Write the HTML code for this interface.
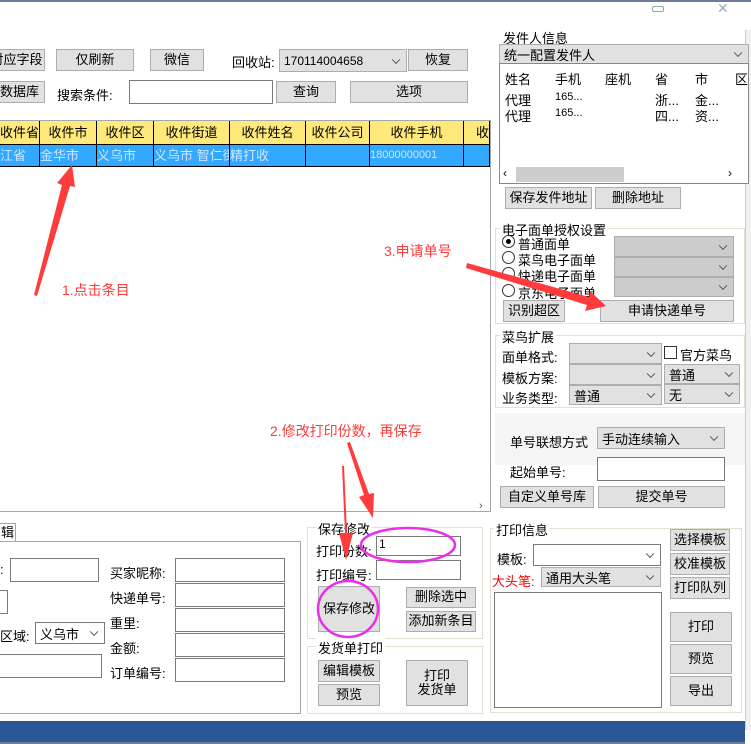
<!DOCTYPE html>
<html><head><meta charset="utf-8"><style>
*{box-sizing:border-box;margin:0;padding:0}
body{width:751px;height:744px;overflow:hidden;background:#fff;position:relative;font-family:"Liberation Sans","Noto Sans CJK SC",sans-serif;font-size:13px;color:#000}
.a{position:absolute;white-space:nowrap}
.b{position:absolute;background:#e1e1e1;border:1px solid #adadad;text-align:center;display:flex;align-items:center;justify-content:center;line-height:1.1;white-space:nowrap}
.i{position:absolute;background:#fff;border:1px solid #7a7a7a}
.c{position:absolute;background:#e1e1e1;border:1px solid #adadad;padding-left:4px;display:flex;align-items:center;white-space:nowrap}
.c::after{content:"";position:absolute;right:7px;top:50%;width:5px;height:5px;border-right:1px solid #555;border-bottom:1px solid #555;transform:translateY(-70%) rotate(45deg)}
.cw{background:#fff;border-color:#7a7a7a}
.g{position:absolute;border:1px solid #e3e0d0}
.gt{position:absolute;background:#fff;padding:0 2px;top:-9px;left:6px}
.th{position:absolute;top:121px;height:24px;background:#ffe97a;border-right:1px solid #000;border-bottom:1px solid #000;text-align:center;line-height:23px;white-space:nowrap;overflow:hidden}
.td{position:absolute;top:145px;height:22px;background:#33a8ff;border-right:1px solid #000;border-bottom:1px solid #000;color:#cfe6ff;line-height:21px;overflow:hidden;white-space:nowrap}
.r{position:absolute;width:13px;height:13px;border:1px solid #333;border-radius:50%;background:#fff}
</style></head><body>
<div class="a" style="left:0;top:0;width:751px;height:2px;background:#6b7d99"></div>
<div class="a" style="top:6px;left:652px;width:12px;height:6px;border:1px solid #8aa;border-radius:2px"></div>
<div class="a" style="left:717px;top:0px;color:#9ab;font-size:14px">✕</div>
<div class="a" style="left:745px;top:30px;width:6px;height:700px;background:#f0f0f0;border-left:1px solid #ccc"></div>

<div class="b" style="left:-12px;top:49px;width:57px;height:22px">对应字段</div>
<div class="b" style="left:56px;top:49px;width:78px;height:22px">仅刷新</div>
<div class="b" style="left:150px;top:49px;width:54px;height:22px">微信</div>
<div class="a" style="left:232px;top:52px">回收站:</div>
<div class="c" style="left:279px;top:49px;width:128px;height:23px;font-size:12px">170114004658</div>
<div class="b" style="left:408px;top:49px;width:60px;height:22px">恢复</div>
<div class="b" style="left:-6px;top:81px;width:51px;height:22px">数据库</div>
<div class="a" style="left:57px;top:85px">搜索条件:</div>
<div class="i" style="left:129px;top:80px;width:144px;height:24px"></div>
<div class="b" style="left:276px;top:81px;width:60px;height:22px">查询</div>
<div class="b" style="left:350px;top:81px;width:118px;height:22px">选项</div>

<div class="a" style="left:0;top:120px;width:491px;height:392px;border-right:1px solid #a0a8b0;border-bottom:1px solid #a0a8b0;border-top:1px solid #a0a8b0"></div>
<div class="th" style="left:0;width:40px;text-align:right;padding-right:2px">收件省</div>
<div class="th" style="left:40px;width:57px">收件市</div>
<div class="th" style="left:97px;width:57px">收件区</div>
<div class="th" style="left:154px;width:76px">收件街道</div>
<div class="th" style="left:230px;width:76px">收件姓名</div>
<div class="th" style="left:306px;width:64px">收件公司</div>
<div class="th" style="left:370px;width:94px">收件手机</div>
<div class="th" style="left:464px;width:26px;text-align:left;padding-left:12px">收</div>
<div class="td" style="left:0;width:40px">江省</div>
<div class="td" style="left:40px;width:57px">金华市</div>
<div class="td" style="left:97px;width:57px">义乌市</div>
<div class="td" style="left:154px;width:76px">义乌市 智仁街</div>
<div class="td" style="left:230px;width:76px">精打收</div>
<div class="td" style="left:306px;width:64px"></div>
<div class="td" style="left:370px;width:94px;font-size:11px">18000000001</div>
<div class="td" style="left:464px;width:26px"></div>
<div class="a" style="left:479px;top:500px;font-size:11px;color:#555">›</div>

<div class="a" style="left:503px;top:28px">发件人信息</div>
<div class="c" style="left:499px;top:44px;width:250px;height:20px">统一配置发件人</div>
<div class="a" style="left:499px;top:63px;width:250px;height:121px;border:1px solid #828790;background:#fff"></div>
<div class="a" style="left:505px;top:69px">姓名</div><div class="a" style="left:555px;top:69px">手机</div><div class="a" style="left:605px;top:69px">座机</div><div class="a" style="left:655px;top:69px">省</div><div class="a" style="left:695px;top:69px">市</div><div class="a" style="left:735px;top:69px">区</div>
<div class="a" style="left:505px;top:90px">代理</div><div class="a" style="left:555px;top:91px;font-size:11px">165...</div><div class="a" style="left:655px;top:90px">浙...</div><div class="a" style="left:695px;top:90px">金...</div>
<div class="a" style="left:505px;top:106px">代理</div><div class="a" style="left:555px;top:107px;font-size:11px">165...</div><div class="a" style="left:655px;top:106px">四...</div><div class="a" style="left:695px;top:106px">资...</div>
<div class="a" style="left:516px;top:167px;width:108px;height:15px;background:#cdcdcd"></div>
<div class="a" style="left:503px;top:166px;font-size:12px">‹</div><div class="a" style="left:728px;top:166px;font-size:12px">›</div>
<div class="b" style="left:505px;top:187px;width:87px;height:22px">保存发件地址</div>
<div class="b" style="left:595px;top:187px;width:86px;height:22px">删除地址</div>

<div class="g" style="left:495px;top:228px;width:250px;height:96px"><span class="gt" style="left:4px">电子面单授权设置</span></div>
<div class="r" style="left:502px;top:235px"><div style="position:absolute;left:3px;top:3px;width:5px;height:5px;border-radius:50%;background:#000"></div></div><div class="a" style="left:518px;top:234px">普通面单</div>
<div class="r" style="left:502px;top:251px"></div><div class="a" style="left:518px;top:250px">菜鸟电子面单</div>
<div class="r" style="left:502px;top:267px"></div><div class="a" style="left:518px;top:266px">快递电子面单</div>
<div class="r" style="left:502px;top:284px"></div><div class="a" style="left:518px;top:283px">京东电子面单</div>
<div class="c" style="left:614px;top:236px;width:120px;height:21px;background:#ccc"></div>
<div class="c" style="left:614px;top:257px;width:120px;height:20px;background:#ccc"></div>
<div class="c" style="left:614px;top:277px;width:120px;height:20px;background:#ccc"></div>
<div class="b" style="left:503px;top:300px;width:62px;height:22px">识别超区</div>
<div class="b" style="left:600px;top:300px;width:134px;height:22px">申请快递单号</div>

<div class="g" style="left:495px;top:335px;width:250px;height:73px"><span class="gt" style="left:4px">菜鸟扩展</span></div>
<div class="a" style="left:502px;top:347px">面单格式:</div>
<div class="a" style="left:502px;top:368px">模板方案:</div>
<div class="a" style="left:502px;top:388px">业务类型:</div>
<div class="c" style="left:569px;top:343px;width:93px;height:21px"></div>
<div class="c" style="left:569px;top:364px;width:93px;height:21px"></div>
<div class="c" style="left:569px;top:385px;width:93px;height:20px">普通</div>
<div class="a" style="left:664px;top:346px;width:13px;height:13px;border:1px solid #333;background:#fff"></div><div class="a" style="left:680px;top:345px">官方菜鸟</div>
<div class="c" style="left:664px;top:364px;width:76px;height:20px">普通</div>
<div class="c" style="left:664px;top:384px;width:76px;height:20px">无</div>

<div class="a" style="left:495px;top:413px;width:250px;height:52px;background:#f5f5f5"></div>
<div class="a" style="left:510px;top:432px">单号联想方式</div>
<div class="c" style="left:597px;top:427px;width:128px;height:22px">手动连续输入</div>
<div class="a" style="left:510px;top:462px">起始单号:</div>
<div class="i" style="left:597px;top:457px;width:128px;height:24px"></div>
<div class="b" style="left:500px;top:486px;width:94px;height:22px">自定义单号库</div>
<div class="b" style="left:598px;top:486px;width:127px;height:22px">提交单号</div>

<div class="g" style="left:490px;top:528px;width:252px;height:185px"><span class="gt" style="left:3px">打印信息</span></div>
<div class="a" style="left:497px;top:549px">模板:</div>
<div class="c cw" style="left:533px;top:544px;width:128px;height:22px"></div>
<div class="a" style="left:492px;top:571px;color:#f00">大头笔:</div>
<div class="c" style="left:541px;top:567px;width:120px;height:20px">通用大头笔</div>
<div class="i" style="left:494px;top:592px;width:168px;height:116px"></div>
<div class="b" style="left:670px;top:529px;width:60px;height:22px">选择模板</div>
<div class="b" style="left:670px;top:553px;width:60px;height:22px">校准模板</div>
<div class="b" style="left:670px;top:577px;width:60px;height:22px">打印队列</div>
<div class="b" style="left:670px;top:612px;width:62px;height:30px">打印</div>
<div class="b" style="left:670px;top:644px;width:62px;height:30px">预览</div>
<div class="b" style="left:670px;top:676px;width:62px;height:30px">导出</div>

<div class="a" style="left:0;top:523px;width:16px;height:19px;border:1px solid #a0a8b0;border-left:none;border-bottom:none;padding-left:1px;line-height:17px">辑</div>
<div class="a" style="left:0;top:541px;width:301px;height:173px;border:1px solid #a0a8b0;border-left:none"></div>
<div class="a" style="left:0;top:562px">:</div>
<div class="i" style="left:10px;top:558px;width:89px;height:24px"></div>
<div class="i" style="left:-2px;top:590px;width:10px;height:24px"></div>
<div class="a" style="left:0;top:626px">区域:</div>
<div class="c cw" style="left:35px;top:622px;width:70px;height:22px">义乌市</div>
<div class="i" style="left:-2px;top:654px;width:104px;height:24px"></div>
<div class="a" style="left:110px;top:563px">买家昵称:</div>
<div class="a" style="left:110px;top:588px">快递单号:</div>
<div class="a" style="left:110px;top:613px">重里:</div>
<div class="a" style="left:110px;top:638px">金额:</div>
<div class="a" style="left:110px;top:663px">订单编号:</div>
<div class="i" style="left:175px;top:558px;width:110px;height:24px"></div>
<div class="i" style="left:175px;top:583px;width:110px;height:24px"></div>
<div class="i" style="left:175px;top:608px;width:110px;height:24px"></div>
<div class="i" style="left:175px;top:633px;width:110px;height:24px"></div>
<div class="i" style="left:175px;top:658px;width:110px;height:24px"></div>

<div class="g" style="left:307px;top:527px;width:176px;height:112px"><span class="gt" style="left:8px">保存修改</span></div>
<div class="a" style="left:316px;top:541px">打印份数:</div>
<div class="i" style="left:376px;top:536px;width:85px;height:20px;font-size:12px;padding-left:2px">1</div>
<div class="a" style="left:316px;top:565px">打印编号:</div>
<div class="i" style="left:376px;top:560px;width:85px;height:20px"></div>
<div class="b" style="left:318px;top:586px;width:62px;height:46px">保存修改</div>
<div class="b" style="left:406px;top:587px;width:70px;height:21px">删除选中</div>
<div class="b" style="left:406px;top:611px;width:70px;height:21px">添加新条目</div>
<div class="g" style="left:307px;top:646px;width:176px;height:68px"><span class="gt" style="left:8px">发货单打印</span></div>
<div class="b" style="left:318px;top:660px;width:62px;height:22px">编辑模板</div>
<div class="b" style="left:318px;top:684px;width:62px;height:22px">预览</div>
<div class="b" style="left:406px;top:660px;width:62px;height:46px">打印<br>发货单</div>

<div class="a" style="left:0;top:721px;width:745px;height:23px;background:#2b5797"></div>
<div class="a" style="left:0;top:742px;width:745px;height:2px;background:#6b7d99"></div>

<svg class="a" style="left:0;top:0" width="751" height="744">
<g fill="#ff3b3b">
<polygon points="34,295 62,185 57,183 72,165 75,187 70,186 37,296"/>
<polygon points="467,263 589,297 590,291 606,306 585,311 587,305 466,268"/>
<polygon points="342,466 345,533 339,533 346,560 353,533 347,533 344,466"/>
<polygon points="347,443 364,495 359,497 373,518 374,493 369,494 350,442"/>
</g>
<g fill="#ff3b3b" font-size="14" font-family="Liberation Sans,Noto Sans CJK SC,sans-serif">
<text x="62" y="295">1.点击条目</text>
<text x="384" y="256">3.申请单号</text>
<text x="270" y="436">2.修改打印份数，再保存</text>
</g>
<g fill="none" stroke="#e830e8" stroke-width="2.5">
<ellipse cx="408" cy="545" rx="47" ry="17"/>
<ellipse cx="348" cy="609" rx="30" ry="28"/>
</g>
</svg>
</body></html>
